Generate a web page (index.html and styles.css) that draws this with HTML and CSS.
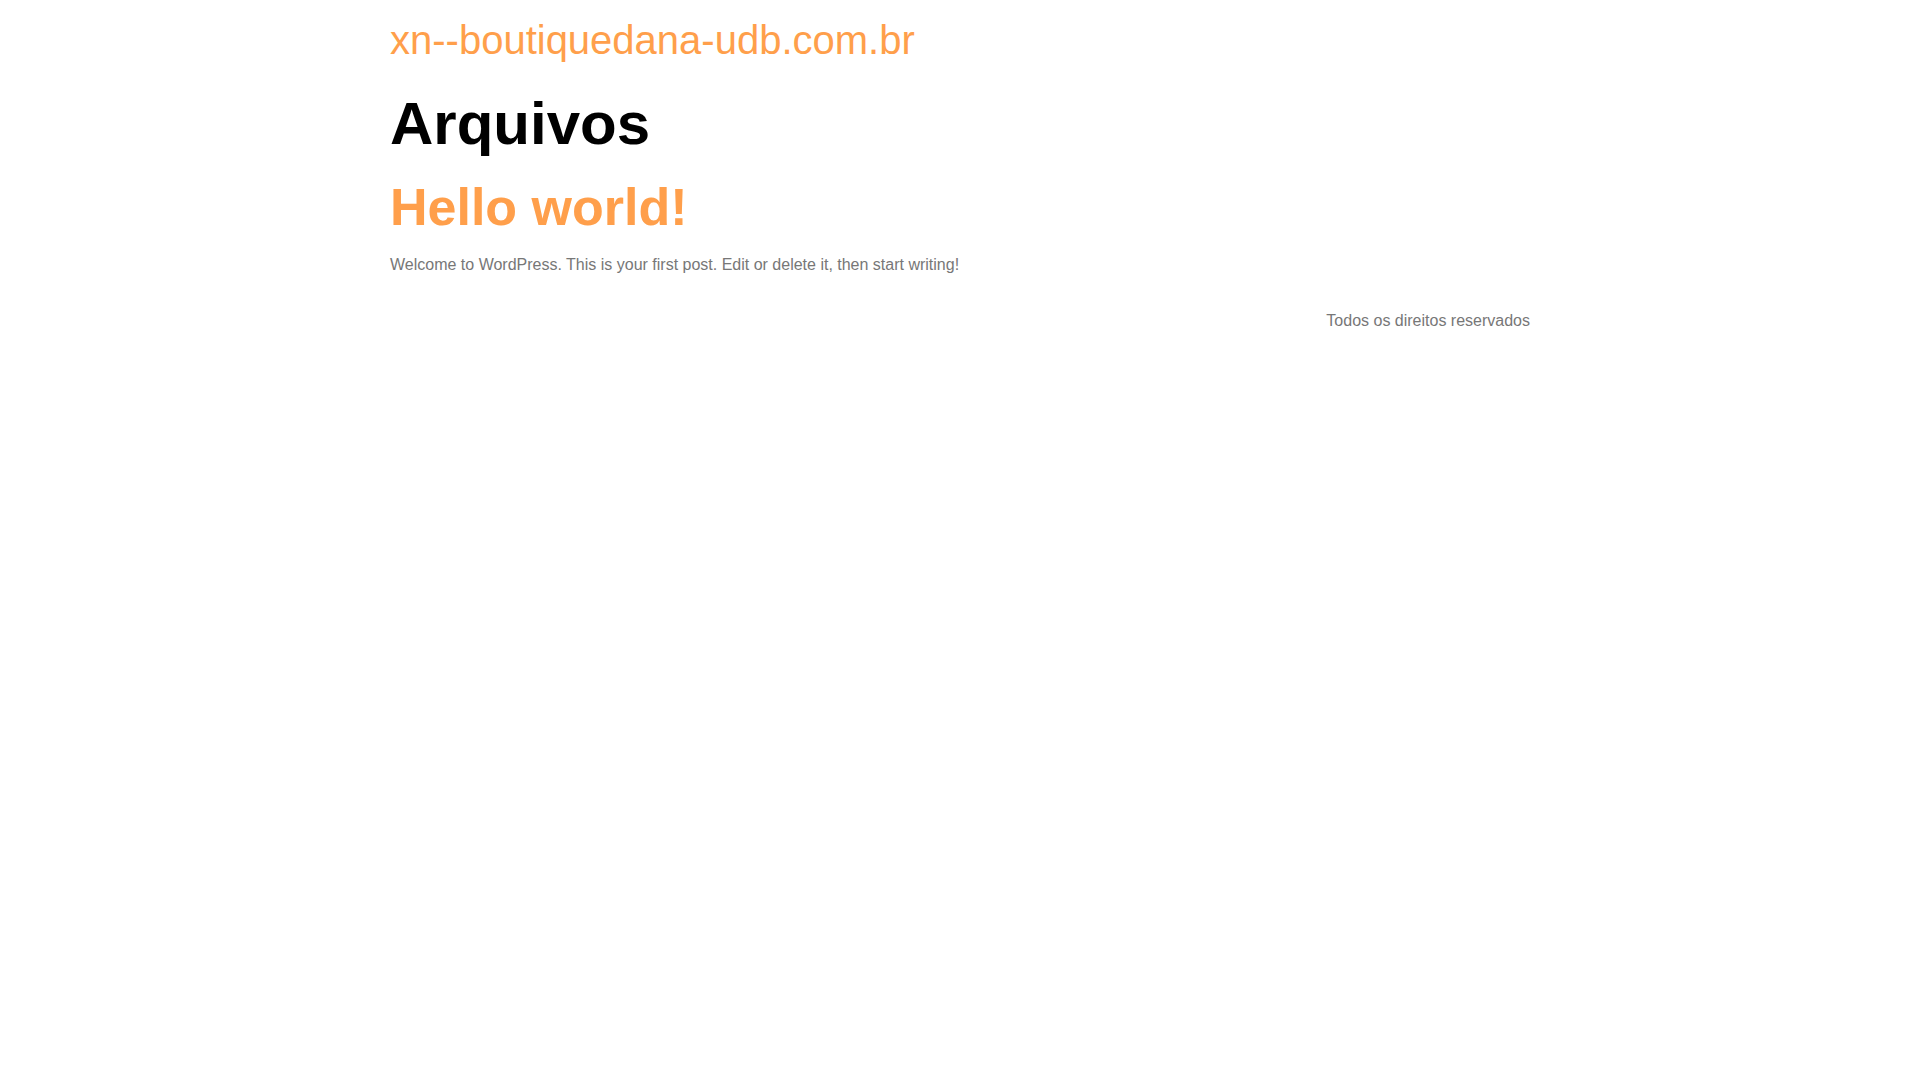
FILE: index.html
```html
<!DOCTYPE html>
<html lang="pt-BR">
<head>
<meta charset="utf-8">
<title>Arquivos - xn--boutiquedana-udb.com.br</title>
<link rel="stylesheet" href="styles.css">
</head>
<body>
<header class="site-header">
  <div class="site-branding">
    <p class="site-title"><a href="#">xn--boutiquedana-udb.com.br</a></p>
  </div>
</header>
<main class="site-main">
  <header class="page-header">
    <h1 class="entry-title">Arquivos</h1>
  </header>
  <div class="page-content">
    <article class="post">
      <h2 class="post-title"><a href="#">Hello world!</a></h2>
      <p class="post-excerpt">Welcome to WordPress. This is your first post. Edit or delete it, then start writing!</p>
    </article>
  </div>
</main>
<footer class="site-footer">
  <div class="copyright">
    <p>Todos os direitos reservados</p>
  </div>
</footer>
</body>
</html>
```
FILE: styles.css
```css
html, body {
  margin: 0;
  padding: 0;
  background: #ffffff;
}
body {
  font-family: "Liberation Sans", Arial, sans-serif;
  font-size: 16px;
  line-height: 1.5;
  color: #777777;
}
a {
  color: #ff9f4b;
  text-decoration: none;
}
.site-header,
.site-main,
.site-footer {
  width: 1140px;
  margin: 0 auto;
}
.site-header {
  padding-top: 16px;
}
.site-title {
  margin: 0;
  font-size: 40px;
  line-height: 1.2;
  font-weight: 400;
}
.page-header {
  margin-top: 24px;
}
.entry-title {
  margin: 0;
  font-size: 60px;
  line-height: 1.2;
  font-weight: 700;
  color: #000000;
}
.post-title {
  margin: 16px 0 0;
  font-size: 52px;
  line-height: 1.2;
  font-weight: 700;
}
.post-excerpt {
  margin: 15px 0 0;
}
.site-footer {
  display: flex;
  justify-content: flex-end;
  margin-top: 32px;
}
.copyright p {
  margin: 0;
}
```
